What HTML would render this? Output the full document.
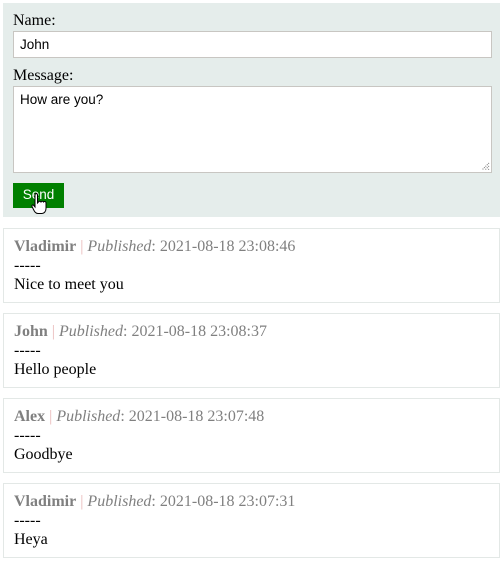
<!DOCTYPE html>
<html><head><style>
body{margin:0;width:504px;height:561px;background:#fff;font-family:"Liberation Serif",serif;font-size:16px;color:#000;position:relative;overflow:hidden}
.panel{position:absolute;left:3px;top:3px;width:497px;height:214px;background:#e5edeb}
.lbl{position:absolute;left:10px;font-size:16px}
.inp{position:absolute;left:10px;width:479px;background:#fff;border:1px solid #c8c6c2;font-family:"Liberation Sans",sans-serif;font-size:13.5px;box-sizing:border-box;padding-left:6px}
.btn{position:absolute;left:10px;top:180px;width:51px;height:25px;background:#008000;color:#fff;font-family:"Liberation Sans",sans-serif;font-size:13.5px;text-align:center;line-height:24px}
.card{position:absolute;left:3px;width:497px;height:75px;border:1px solid #e3e8e6;box-sizing:border-box}
.meta{position:absolute;left:10px;top:9px;color:#808080;font-size:16px;white-space:nowrap}
.meta b{color:#808080}
.meta .sep{color:#e9b9b9}
.l2{position:absolute;left:10px;top:27px;font-size:16px;line-height:19px}
</style></head><body>
<div class="panel">
<div class="lbl" style="top:9px">Name:</div>
<div class="inp" style="top:28px;height:27px;line-height:25px">John</div>
<div class="lbl" style="top:64px">Message:</div>
<div class="inp" style="top:83px;height:87px;padding-top:5px">How are you?
<svg style="position:absolute;right:1px;bottom:1px" width="9" height="9"><path d="M8 1L1 8M8 4L4 8M8 7L7 8" stroke="#777" stroke-width="1" stroke-dasharray="1 1"/></svg></div>
<div class="btn">Send</div>
<svg style="position:absolute;left:27px;top:189px" width="22" height="26"><path d="M6 1.5c1 0 1.5.5 1.5 1.5v8l1-1c.5-1 2-1 2.5 0 .5-1 2-1 2.5 0 .5-.8 2-.8 2.5.5v6c0 3-2 5-4 5h-4c-1.5 0-3-1-4-3l-2-4c-.5-1 .5-2 1.5-1.3l1.5 1.8V3c0-1 .5-1.5 1.5-1.5z" fill="#fff" stroke="#000" stroke-width="1"/></svg>
</div>
<div class="card" style="top:228px"><div class="meta"><b>Vladimir</b> <span class="sep">|</span> <i>Published</i>: 2021-08-18 23:08:46</div><div class="l2">-----<br>Nice to meet you</div></div>
<div class="card" style="top:313px"><div class="meta"><b>John</b> <span class="sep">|</span> <i>Published</i>: 2021-08-18 23:08:37</div><div class="l2">-----<br>Hello people</div></div>
<div class="card" style="top:398px"><div class="meta"><b>Alex</b> <span class="sep">|</span> <i>Published</i>: 2021-08-18 23:07:48</div><div class="l2">-----<br>Goodbye</div></div>
<div class="card" style="top:483px"><div class="meta"><b>Vladimir</b> <span class="sep">|</span> <i>Published</i>: 2021-08-18 23:07:31</div><div class="l2">-----<br>Heya</div></div>
</body></html>
